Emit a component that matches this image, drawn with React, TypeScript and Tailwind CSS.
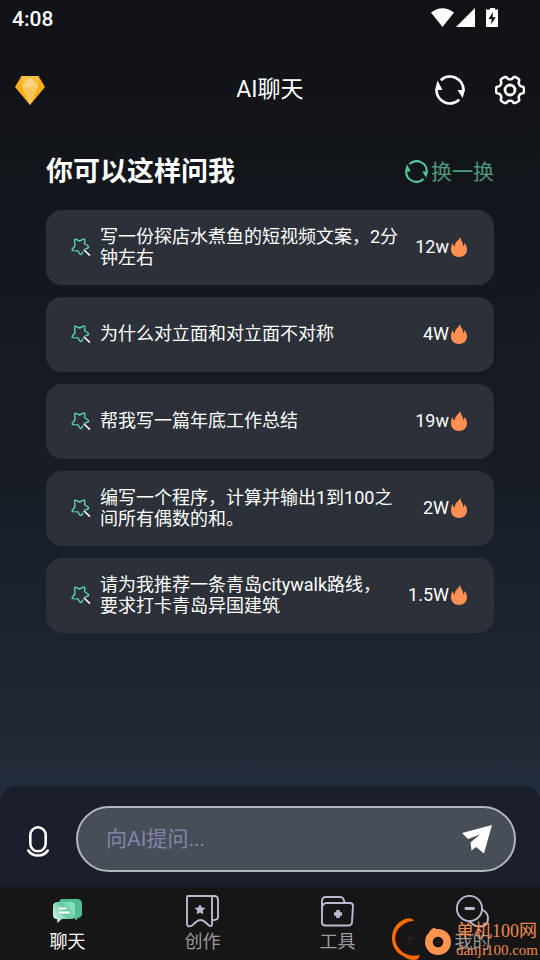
import React from 'react';

function gearPath(): string {
  const points: string[] = [];
  for (let i = 0; i < 120; i++) {
    const a = (i / 120) * Math.PI * 2;
    const r = 12.4 + Math.tanh(2.6 * (Math.cos(6 * a) + 0.15)) * 1.6;
    points.push(`${(15 + r * Math.cos(a)).toFixed(2)} ${(15 + r * Math.sin(a)).toFixed(2)}`);
  }
  return `M${points.join('L')}Z`;
}

function RefreshIcon({ className }: { className: string }) {
  return (
    <svg viewBox="0 0 30 30" className={className} fill="none" stroke="currentColor" strokeWidth="2.8" aria-hidden="true">
      <path d="M5.8 5.2A13.5 13.5 0 0 1 28.5 15.5" />
      <path d="M1.5 14.5A13.5 13.5 0 0 0 24.2 24.8" />
      <path d="M2.5 5.5 7.500 15H0Z M22.500 15H30l-2.300 8Z" fill="currentColor" stroke="none" />
    </svg>
  );
}

function GearIcon() {
  return (
    <svg viewBox="0 0 30 30" className="size-[30px]" fill="none" stroke="currentColor" strokeWidth="2.5" strokeLinejoin="round" aria-hidden="true">
      <path d={gearPath()} />
      <circle cx="15" cy="15" r="5" strokeWidth="2.8" />
    </svg>
  );
}

function GemIcon() {
  return (
    <svg viewBox="0 0 30 29" className="h-[29px] w-[30px]" aria-hidden="true">
      <path d="M6.5 0h17L30 11 15 29 0 11Z" fill="#fdad18" />
      <path d="M6.5 0h17L23 11H7Z" fill="#fcc047" />
      <path d="M15 1 23 11H7Z" fill="#fbd584" />
      <path d="M7 11h16l-8 18Z" fill="#fcc559" />
    </svg>
  );
}

function StarIcon() {
  return (
    <svg viewBox="0 0 20 20" className="size-5 shrink-0" fill="none" strokeLinejoin="round" aria-hidden="true">
      <path
        d="M5 2.300 8.500 4 12 2.300Q14 1.500 13.800 3.500L13.500 6.500 17 9Q18.500 10.300 16.800 11L13.500 12.300 11 16.500Q9.500 18.500 8.500 16.500L7 13.900 2 13.600Q.500 13.300 1.500 12L4 8.800 3.600 3.500Q3.500 1.700 5 2.300Z"
        stroke="#5fd3a2"
        strokeWidth="1.4"
      />
      <path d="m12.500 12.800 6.500 5.800" stroke="#2c3038" strokeWidth="3" />
      <path d="m12.800 12.800 6.200 5.800" stroke="#fff" strokeWidth="1.500" />
    </svg>
  );
}

function FlameIcon() {
  return (
    <svg viewBox="0 0 16 20" className="h-5 w-4 shrink-0" fill="#ff8f52" aria-hidden="true">
      <path d="M9.200 0C9.200 3 12.300 5 12.300 9.500Q13.300 8.500 13.500 6C15.200 8 16 10 16 12.500 16 17 12.500 20 8 20S0 17 0 12.500C0 10 .5 8 1.500 6Q2.200 9 3.800 9.800C3.600 4.500 7.500 4 9.200 0Z" />
    </svg>
  );
}

function StatusIcons() {
  return (
    <svg viewBox="0 0 68 20" className="h-5 w-[68px]" fill="#fff" aria-hidden="true">
      <path d="M0 4.5Q11.500-4.200 23 4.500L11.500 19Z" />
      <path d="M44 0v19H25Z" />
      <path d="M59 0h5v1.500h3V19H55V1.500h4Z" />
      <path d="m62 4-4.500 7h3.200L60 16.500l4.800-7.200h-3.200Z" fill="#101317" />
    </svg>
  );
}

function MicIcon() {
  return (
    <svg viewBox="0 0 22 31" className="h-[31px] w-[22px]" fill="none" stroke="#fff" strokeWidth="2.600" strokeLinecap="round" aria-hidden="true">
      <rect x="3.300" y="1.300" width="15.400" height="24" rx="7.700" />
      <path d="M1.300 24.500Q4.500 29.500 11 29.500T20.700 24.500" />
    </svg>
  );
}

function SendIcon() {
  return (
    <svg viewBox="0 0 30 29" className="h-[29px] w-[30px]" fill="#fff" aria-hidden="true">
      <path d="M30 0 22 28.500 14 22 9.500 25.500 8.500 17.500 18 9.500 6 14 0 8Z" />
    </svg>
  );
}

function ChatIcon() {
  return (
    <svg viewBox="1 0 34 34" className="size-[34px]" aria-hidden="true">
      <defs>
        <linearGradient id="bubble" x1="0" y1="1" x2="1" y2="0.400">
          <stop offset="0" stopColor="#f4fffa" />
          <stop offset="0.650" stopColor="#65c99f" />
          <stop offset="1" stopColor="#8cdfbd" />
        </linearGradient>
      </defs>
      <path d="M13 5h14q5 0 5 5v10q0 3-4 4l-2 2.500-2-3H13q-4 0-4-4V9q0-4 4-4Z" fill="#4fbf90" />
      <path d="M8 8h13q4 0 4 4v9q0 4-4 4h-9l-4.500 4L7 25q-4 0-4-4v-9q0-4 5-4Z" fill="url(#bubble)" />
      <path d="M9.500 14.500h6M9.500 18.500h9.500" stroke="#fff" strokeWidth="1.800" strokeLinecap="round" />
    </svg>
  );
}

function CreateIcon() {
  return (
    <svg viewBox="1 0 34 34" className="size-[34px]" fill="none" stroke="#b9bbd3" strokeWidth="1.900" strokeLinejoin="round" aria-hidden="true">
      <path d="M3 2h24v28q0 3-3 1.500l-4-3.500q-4.500-4-9 0l-4 3.500q-5 2.500-5-2V4q0-2 1-2Z" />
      <path d="M26 2h3q4 0 4 4v17q0 3-5 3" />
      <path d="m15 11 1.400 2.800 3.100.4-2.200 2.200.5 3.100-2.800-1.500-2.800 1.500.5-3.100-2.200-2.200 3.100-.4Z" fill="#b9bbd3" strokeWidth="1" />
    </svg>
  );
}

function ToolsIcon() {
  return (
    <svg viewBox="1 0 34 34" className="size-[34px]" fill="none" stroke="#b9bbd3" strokeWidth="1.900" strokeLinejoin="round" aria-hidden="true">
      <path d="M7 9h23q3 0 3 3l-1 16q0 3.500-4 3.500H5q-3 0-3-3V7q0-4 4-4h14q4 0 4.500 6" />
      <path d="M2 15q0-6 5-6" />
      <path d="M18 16v8M14 20h8" strokeWidth="3.600" />
    </svg>
  );
}

function MineIcon() {
  return (
    <svg viewBox="1 0 34 34" className="size-[34px]" fill="none" stroke="#b9bbd3" strokeWidth="1.900" aria-hidden="true">
      <circle cx="14.500" cy="14.500" r="12.600" />
      <path d="M27 15.500q6 3 6 9 0 8-8 8-7 0-10-5.500" />
      <path d="M11 14.500h7.500" strokeWidth="3" strokeLinecap="round" />
    </svg>
  );
}

const prompts = [
  { text: '写一份探店水煮鱼的短视频文案，2分钟左右', heat: '12w' },
  { text: '为什么对立面和对立面不对称', heat: '4W' },
  { text: '帮我写一篇年底工作总结', heat: '19w' },
  { text: '编写一个程序，计算并输出1到100之间所有偶数的和。', heat: '2W' },
  { text: '请为我推荐一条青岛citywalk路线，要求打卡青岛异国建筑', heat: '1.5W' },
];

const tabs = [
  { label: '聊天', icon: <ChatIcon />, active: true },
  { label: '创作', icon: <CreateIcon />, active: false },
  { label: '工具', icon: <ToolsIcon />, active: false },
  { label: '我的', icon: <MineIcon />, active: false },
];

function Watermark() {
  return (
    <div className="pointer-events-none absolute right-0.5 bottom-0 flex items-end text-[#f08a50]">
      <svg viewBox="0 0 64 42" className="mr-0.5 h-[42px] w-16" aria-hidden="true">
        <path d="M24 3Q22-1 15 1C-1 7-3 30 13 38q8 6 15 3l2-4q-9 2-14-1C2 29 3 13 14 6q4-3 10-3Z" fill="#ff6a00" />
        <circle cx="20" cy="20" r="14" fill="none" stroke="#221613" strokeWidth="1.500" />
        <path d="M20 16v9M15.500 20.500h9" stroke="#38201a" strokeWidth="1.500" />
        <circle cx="48" cy="24" r="13" fill="#ff9350" />
        <path d="M44 9.500q2 2 6 2.500l-10 4-1-2q2-3 5-4.500Z" fill="#ff9350" />
        <circle cx="48" cy="24" r="4.500" fill="#24150f" stroke="#0d0a09" strokeWidth="1.500" />
      </svg>
      <div className="font-['Liberation_Serif','Noto_Sans_CJK_SC',serif]">
        <div className="text-lg leading-[18px]">单机100网</div>
        <div className="text-[15px] leading-5">danji100.com</div>
      </div>
    </div>
  );
}

export default function App() {
  return (
    <div className="flex min-h-screen flex-col bg-linear-to-b from-[#101215] via-[#171c25] to-[#2a3546] font-['Roboto','Noto_Sans_CJK_SC',sans-serif] text-white">
      <div className="flex h-9 items-center justify-between pr-[41px] pl-3">
        <span className="pt-1 text-[21px] font-medium">4:08</span>
        <StatusIcons />
      </div>

      <header className="grid h-[108px] grid-cols-3 items-center px-[15px]">
        <button type="button" aria-label="会员" className="justify-self-start">
          <GemIcon />
        </button>
        <h1 className="justify-self-center text-[23px]">AI聊天</h1>
        <div className="flex gap-[30px] justify-self-end">
          <button type="button" aria-label="刷新">
            <RefreshIcon className="size-[30px]" />
          </button>
          <button type="button" aria-label="设置">
            <GearIcon />
          </button>
        </div>
      </header>

      <main className="flex-1 px-[46px]">
        <div className="flex h-[54px] items-center justify-between pt-0.5">
          <h2 className="text-[27px] font-bold">你可以这样问我</h2>
          <button type="button" className="flex items-center gap-[3px] text-[21px] text-[#4d9a7d]">
            <RefreshIcon className="mb-0.5 size-[23px] text-[#55c898]" />
            <span className="pt-0.5">换一换</span>
          </button>
        </div>
        <ul className="mt-3 flex flex-col gap-3">
          {prompts.map((prompt) => (
            <li key={prompt.text}>
              <button
                type="button"
                className="flex h-[75px] w-full items-center rounded-2xl bg-[#2c3038] pr-[27px] pb-0.5 pl-[25px] text-left text-lg leading-[21px]"
              >
                <StarIcon />
                <span className="mr-3.5 ml-[9px] flex-1">{prompt.text}</span>
                <span className="flex shrink-0 items-center gap-0.5">
                  {prompt.heat}
                  <FlameIcon />
                </span>
              </button>
            </li>
          ))}
        </ul>
      </main>

      <form className="flex items-center gap-[27px] rounded-t-2xl bg-[#1a1f2b] pt-5 pr-6 pb-[15px] pl-[27px]" onSubmit={(e) => e.preventDefault()}>
        <button type="button" aria-label="语音输入" className="pt-1">
          <MicIcon />
        </button>
        <div className="flex h-[66px] flex-1 items-center rounded-full border-2 border-[#b3b6ba] bg-[#484e58] pr-[22px] pl-7">
          <input
            type="text"
            aria-label="向AI提问"
            placeholder="向AI提问..."
            className="min-w-0 flex-1 bg-transparent pt-0.5 text-[21px] outline-none placeholder:text-[#8385a8]"
          />
          <button type="submit" aria-label="发送">
            <SendIcon />
          </button>
        </div>
      </form>

      <nav className="relative grid h-[73px] grid-cols-4 bg-[#161616]">
        {tabs.map((tab) => (
          <button
            key={tab.label}
            type="button"
            className={`flex flex-col items-center pt-[7px] text-lg leading-[27px] ${tab.active ? 'text-white' : 'text-[#9b9b9b]'}`}
          >
            {tab.icon}
            {tab.label}
          </button>
        ))}
        <Watermark />
      </nav>
    </div>
  );
}
